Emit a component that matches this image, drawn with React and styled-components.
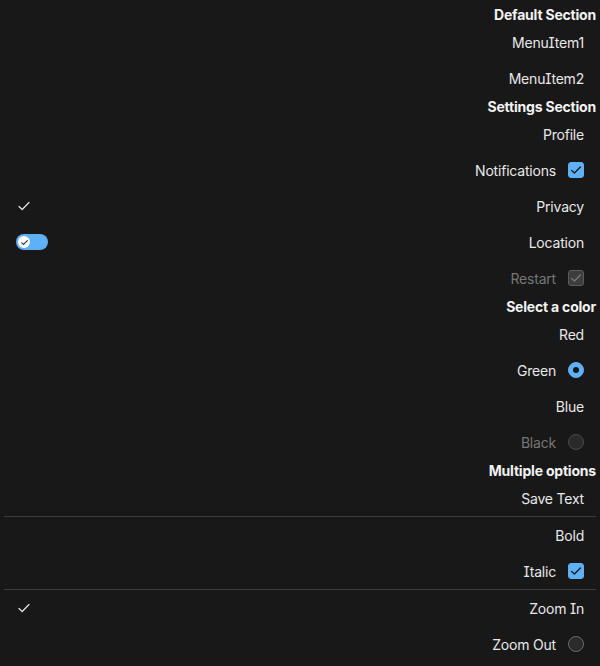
import React from "react";
import styled, { createGlobalStyle } from "styled-components";

const Global = createGlobalStyle`
  html, body { margin: 0; padding: 0; background: #181818; }
  body {
    font-family: Inter, "Noto Sans", sans-serif;
    font-feature-settings: "cv08" 1;
    letter-spacing: -0.2px;
    -webkit-font-smoothing: antialiased;
  }
`;

const Menu = styled.div`
  width: 600px;
  min-height: 666px;
  box-sizing: border-box;
  padding: 4px;
  background: #181818;
  display: flex;
  flex-direction: column;
`;

const Heading = styled.div`
  height: 20px;
  display: flex;
  align-items: center;
  justify-content: flex-end;
  font-size: 14px;
  font-weight: 700;
  color: #f2f2f2;
`;

const Item = styled.div`
  height: 36px;
  display: flex;
  align-items: center;
  padding: 0 12px;
  gap: 12px;
  font-size: 14px;
  color: ${(p) => (p.$disabled ? "#767676" : "#e8e8e8")};
`;

const Label = styled.span`
  margin-left: auto;
`;

const Divider = styled.div`
  height: 1px;
  background: #3c3c3c;
`;

const Box = styled.span`
  width: 16px;
  height: 16px;
  box-sizing: border-box;
  border-radius: 3px;
  display: flex;
  align-items: center;
  justify-content: center;
  background: ${(p) => (p.$disabled ? "#3d3d3d" : "#5eb0f7")};
  border: 1px solid ${(p) => (p.$disabled ? "#5c5c5c" : "#5eb0f7")};
`;

const Radio = styled.span`
  width: 16px;
  height: 16px;
  box-sizing: border-box;
  border-radius: 50%;
  display: flex;
  align-items: center;
  justify-content: center;
  background: ${(p) => (p.$checked ? "#5eb0f7" : "#2a2a2a")};
  border: 1px solid ${(p) => (p.$checked ? "#5eb0f7" : p.$disabled ? "#4a4a4a" : "#6a6a6a")};
`;

const Dot = styled.span`
  width: 6px;
  height: 6px;
  border-radius: 50%;
  background: #161616;
`;

const Toggle = styled.span`
  width: 32px;
  height: 16px;
  border-radius: 8px;
  background: #5eb0f7;
  display: flex;
  align-items: center;
  padding: 0 2px;
  box-sizing: border-box;
`;

const Thumb = styled.span`
  width: 12px;
  height: 12px;
  border-radius: 50%;
  background: #ffffff;
  display: flex;
  align-items: center;
  justify-content: center;
`;

const LeftCheck = styled.span`
  display: flex;
  width: 16px;
  height: 16px;
  align-items: center;
  justify-content: center;
`;

const Check = ({ size = 12, color = "#1a1a1a", width = 1.5 }) => (
  <svg width={size} height={size} viewBox="0 0 16 16" fill="none">
    <path d="M3 8.5l3.2 3L13 4.5" stroke={color} strokeWidth={width} strokeLinecap="round" strokeLinejoin="round" />
  </svg>
);

export default function App() {
  return (
    <>
      <Global />
      <Menu>
        <Heading>Default Section</Heading>
        <Item><Label>MenuItem1</Label></Item>
        <Item><Label>MenuItem2</Label></Item>
        <Heading>Settings Section</Heading>
        <Item><Label>Profile</Label></Item>
        <Item>
          <Label>Notifications</Label>
          <Box><Check size={14} /></Box>
        </Item>
        <Item>
          <LeftCheck><Check size={16} color="#e8e8e8" width={1.2} /></LeftCheck>
          <Label>Privacy</Label>
        </Item>
        <Item>
          <Toggle><Thumb><Check size={9} color="#222" width={1.8} /></Thumb></Toggle>
          <Label>Location</Label>
        </Item>
        <Item $disabled>
          <Label>Restart</Label>
          <Box $disabled><Check size={14} color="#7a7a7a" /></Box>
        </Item>
        <Heading>Select a color</Heading>
        <Item><Label>Red</Label></Item>
        <Item>
          <Label>Green</Label>
          <Radio $checked><Dot /></Radio>
        </Item>
        <Item><Label>Blue</Label></Item>
        <Item $disabled>
          <Label>Black</Label>
          <Radio $disabled />
        </Item>
        <Heading>Multiple options</Heading>
        <Item><Label>Save Text</Label></Item>
        <Divider />
        <Item><Label>Bold</Label></Item>
        <Item>
          <Label>Italic</Label>
          <Box><Check size={14} /></Box>
        </Item>
        <Divider />
        <Item>
          <LeftCheck><Check size={16} color="#e8e8e8" width={1.2} /></LeftCheck>
          <Label>Zoom In</Label>
        </Item>
        <Item>
          <Label>Zoom Out</Label>
          <Radio />
        </Item>
      </Menu>
    </>
  );
}
